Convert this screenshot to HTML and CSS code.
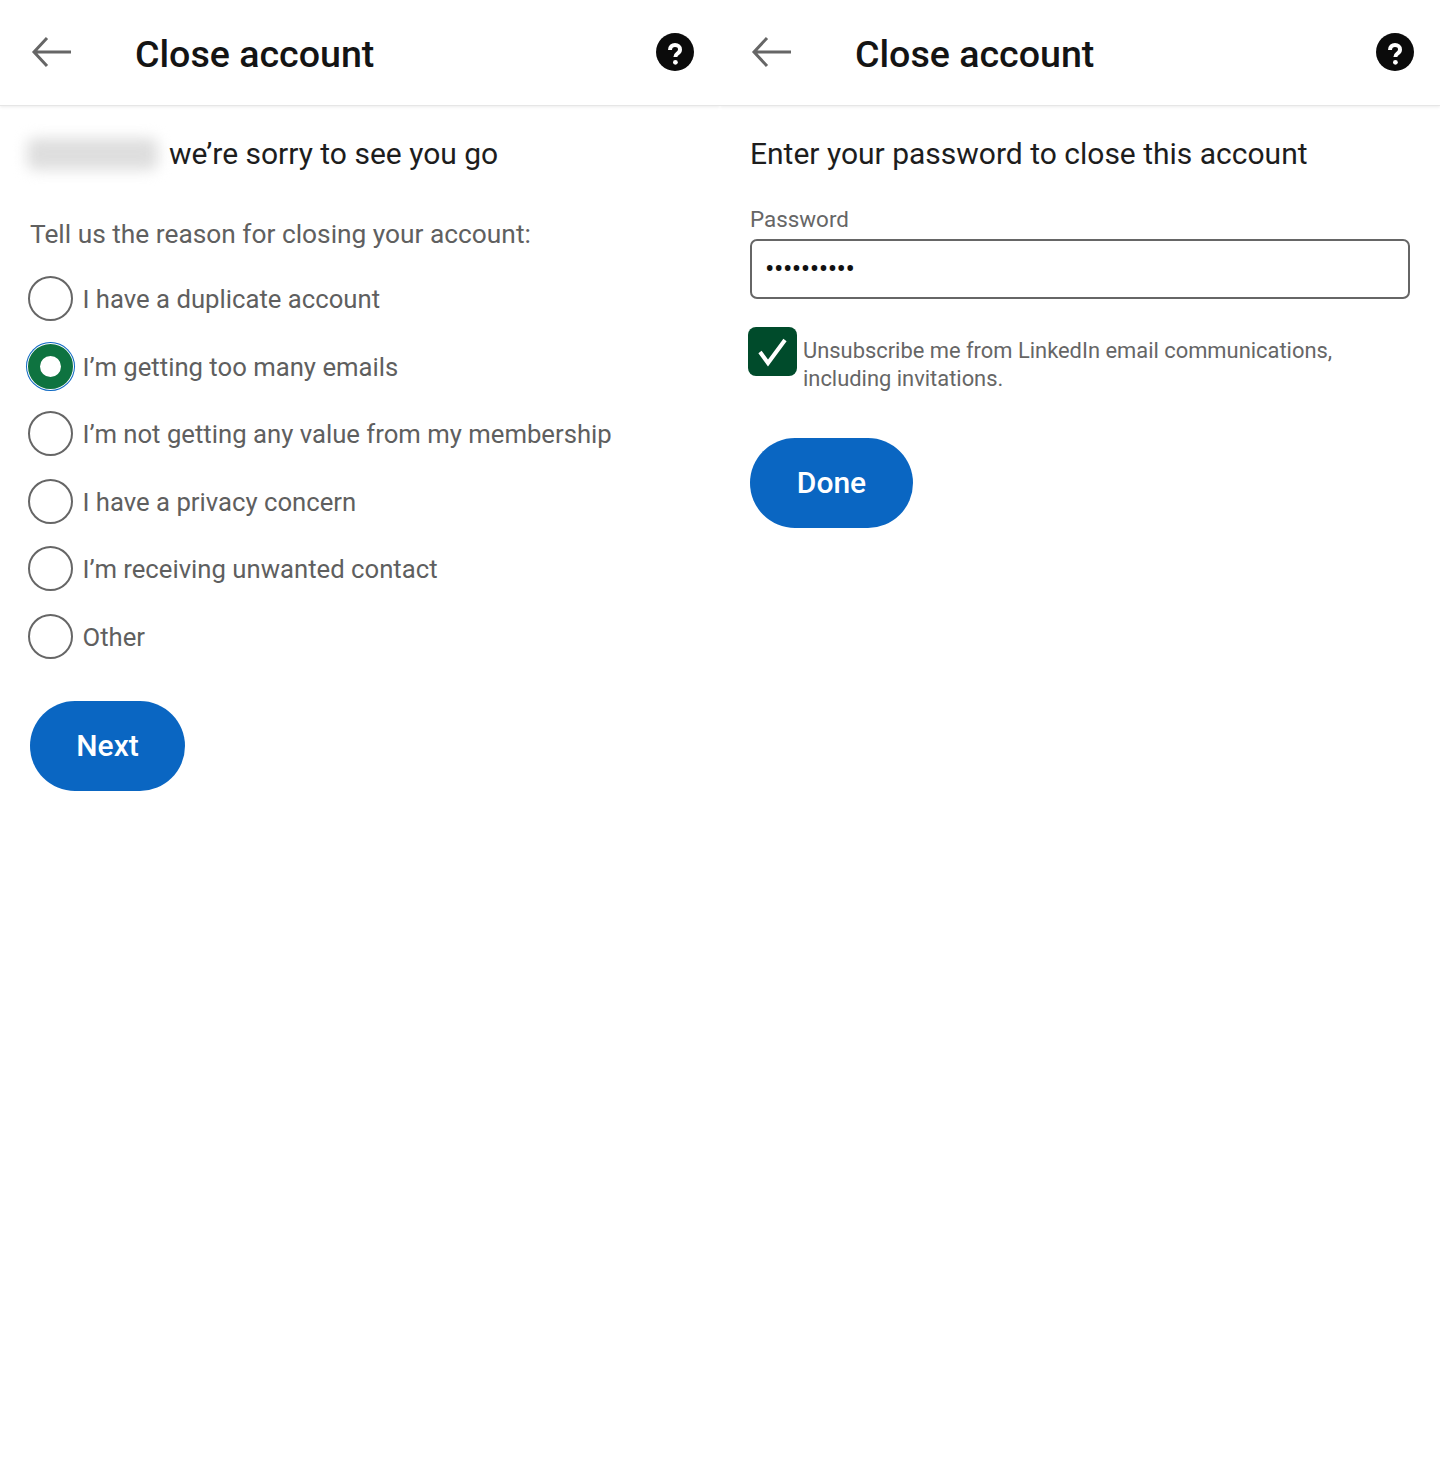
FILE: index.html
```html
<!DOCTYPE html>
<html lang="en">
<head>
  <meta charset="UTF-8" />
  <title>Close account</title>
  <link rel="stylesheet" href="styles.css">
</head>
<body>
  <div class="screens">
    <section class="screen">
      <header class="top-bar">
        <svg class="back-icon" viewBox="0 0 42 32" aria-hidden="true"><path d="M40 16H3M16 2L3 16l13 14" /></svg>
        <h1 class="top-title">Close account</h1>
        <svg class="help-icon" viewBox="0 0 38 38" aria-hidden="true">
          <circle cx="19" cy="19" r="19" fill="#0b0b0b" />
          <path d="M14 17c0-3.200 2.200-5 5-5 2.900 0 5 1.700 5 4.400 0 2.200-1.100 3.200-2.600 4.200-1.400 1-2 1.600-2 3.400" fill="none" stroke="#fff" stroke-width="4" />
          <circle cx="19.400" cy="29.300" r="2.400" fill="#fff" />
        </svg>
      </header>
      <div class="content">
        <div class="sorry-line">
          <div class="blurred-name"></div>
          <h2 class="lead">we’re sorry to see you go</h2>
        </div>
        <p class="reason-title">Tell us the reason for closing your account:</p>
        <ul class="reason-list">
          <li class="reason"><span class="radio"></span>I have a duplicate account</li>
          <li class="reason"><span class="radio selected"></span>I’m getting too many emails</li>
          <li class="reason"><span class="radio"></span>I’m not getting any value from my membership</li>
          <li class="reason"><span class="radio"></span>I have a privacy concern</li>
          <li class="reason"><span class="radio"></span>I’m receiving unwanted contact</li>
          <li class="reason"><span class="radio"></span>Other</li>
        </ul>
        <button class="primary-btn next-btn">Next</button>
      </div>
    </section>

    <section class="screen">
      <header class="top-bar">
        <svg class="back-icon" viewBox="0 0 42 32" aria-hidden="true"><path d="M40 16H3M16 2L3 16l13 14" /></svg>
        <h1 class="top-title">Close account</h1>
        <svg class="help-icon" viewBox="0 0 38 38" aria-hidden="true">
          <circle cx="19" cy="19" r="19" fill="#0b0b0b" />
          <path d="M14 17c0-3.200 2.200-5 5-5 2.900 0 5 1.700 5 4.400 0 2.200-1.100 3.200-2.600 4.200-1.400 1-2 1.600-2 3.400" fill="none" stroke="#fff" stroke-width="4" />
          <circle cx="19.400" cy="29.300" r="2.400" fill="#fff" />
        </svg>
      </header>
      <div class="content">
        <h2 class="lead">Enter your password to close this account</h2>
        <label class="field-label">Password</label>
        <div class="password-box">••••••••••</div>
        <div class="unsubscribe">
          <span class="checkbox">
            <svg viewBox="0 0 49 49" aria-hidden="true"><path d="M12 25l8 11L37 13" /></svg>
          </span>
          <p class="unsubscribe-text">Unsubscribe me from LinkedIn email communications, including invitations.</p>
        </div>
        <button class="primary-btn done-btn">Done</button>
      </div>
    </section>
  </div>
</body>
</html>
```

FILE: styles.css
```css
* {
  box-sizing: border-box;
}
body, html {
  margin: 0;
  padding: 0;
  height: 100%;
  background: #fff;
  font-family: Roboto, "Liberation Sans", sans-serif;
}
.screens {
  display: grid;
  grid-template-columns: 720px 720px;
  width: 1440px;
  height: 1462px;
}
.screen {
  overflow: hidden;
}
.top-bar {
  display: flex;
  align-items: center;
  height: 106px;
  padding: 4px 26px 0 31px;
  border-bottom: 1px solid #e6e6e6;
  box-shadow: 0 1px 3px rgba(0,0,0,0.08);
}
.back-icon {
  width: 42px;
  height: 32px;
  flex: none;
  margin-bottom: 5px;
  fill: none;
  stroke: #666;
  stroke-width: 3;
}
.top-title {
  flex: 1;
  margin: 0 0 2px 62px;
  color: #141414;
  font-size: 37.6px;
  font-weight: 500;
  line-height: 44px;
}
.help-icon {
  width: 38px;
  height: 38px;
  flex: none;
  margin-bottom: 5px;
}
.content {
  padding: 30px 30px 0;
}
.sorry-line {
  display: flex;
  align-items: center;
}
.blurred-name {
  width: 131px;
  height: 32px;
  margin: 0 11px 0 -3px;
  border-radius: 8px;
  background: #dedede;
  filter: blur(7px);
}
.lead {
  margin: 0;
  color: #1d1d1d;
  font-size: 30px;
  font-weight: 400;
  line-height: 36px;
}
.reason-title {
  margin: 44px 0 0;
  color: #606060;
  font-size: 26.3px;
  line-height: 36px;
}
.reason-list {
  margin: 13px 0 0;
  padding: 0;
  list-style: none;
}
.reason {
  display: flex;
  align-items: center;
  height: 67.5px;
  padding-top: 1px;
  color: #5f5f5f;
  font-size: 25.7px;
}
.radio {
  width: 45px;
  height: 45px;
  flex: none;
  margin: -1px 9.5px 0 -2px;
  border: 2px solid #666;
  border-radius: 50%;
}
.radio.selected {
  border: 12px solid #0e7340;
  background: #fff;
  box-shadow: 0 0 0 1px #fff, 0 0 0 2px #0a66c2;
}
.primary-btn {
  display: block;
  height: 90px;
  padding: 0 0 2px;
  border: none;
  border-radius: 45px;
  background: #0a66c2;
  color: #fff;
  font-family: inherit;
  font-size: 30px;
  font-weight: 500;
}
.next-btn {
  width: 155px;
  margin-top: 31px;
}
.done-btn {
  width: 163px;
  margin-top: 45px;
}
.field-label {
  display: block;
  margin-top: 32px;
  color: #666;
  font-size: 22.4px;
  line-height: 30px;
}
.password-box {
  height: 60px;
  margin-top: 5px;
  padding: 0 13px;
  border: 2px solid #666;
  border-radius: 7px;
  color: #111;
  font-size: 28px;
  letter-spacing: -0.5px;
  line-height: 56px;
}
.unsubscribe {
  display: flex;
  margin: 28px 0 0 -2px;
}
.checkbox {
  width: 49px;
  height: 49px;
  flex: none;
  border-radius: 8px;
  background: #004b2b;
}
.checkbox svg {
  display: block;
  fill: none;
  stroke: #fff;
  stroke-width: 4;
}
.unsubscribe-text {
  margin: 10px 0 0 6px;
  color: #666;
  font-size: 21.9px;
  line-height: 28px;
}
```
